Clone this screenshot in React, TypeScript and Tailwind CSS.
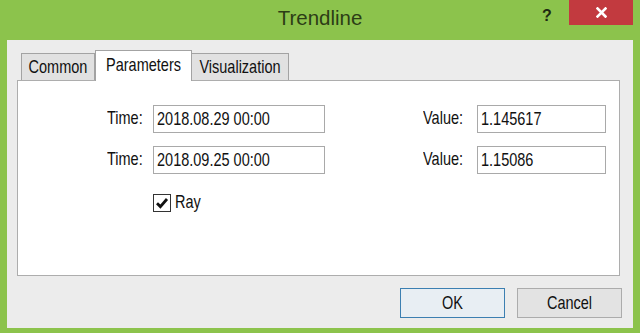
import React from "react";

const T = ({ children, className = "" }: { children: React.ReactNode; className?: string }) => (
  <span className={"inline-block scale-y-[1.28] origin-center leading-none " + className}>{children}</span>
);

function Field({ label, value, labelW, inputW }: { label: string; value: string; labelW: string; inputW: string }) {
  return (
    <div className="flex items-center">
      <div className={labelW + " text-[14.5px] text-[#111]"}>
        <T>{label}</T>
      </div>
      <div className={inputW + " h-[28px] border border-[#a9a9a9] bg-white flex items-center pl-[3px] text-[14.5px] text-[#111]"}>
        <T>{value}</T>
      </div>
    </div>
  );
}

export default function App() {
  return (
    <div
      className="w-[640px] h-[333px] bg-[#8cc34c] flex flex-col overflow-hidden"
      style={{ fontFamily: '"Liberation Sans", Arial, sans-serif' }}
    >
      {/* Title bar */}
      <div className="relative h-[40px] flex items-center justify-center shrink-0">
        <span className="text-[20.5px] text-[#2c3d16] leading-none pb-[4px]">Trendline</span>
        <span className="absolute left-[542px] top-[4px] text-[16px] font-bold text-[#1e2a12]">?</span>
        <div className="absolute left-[569px] top-0 w-[64px] h-[25px] bg-[#c23a3f] flex items-center justify-center">
          <svg width="11" height="11" viewBox="0 0 11 11">
            <path d="M1.5 1.5 L9.5 9.5 M9.5 1.5 L1.5 9.5" stroke="white" strokeWidth="2.6" strokeLinecap="square" />
          </svg>
        </div>
      </div>

      {/* Client area */}
      <div className="mx-[7px] h-[288px] bg-[#ececec] flex flex-col pl-[10px] pt-[10px]">
        {/* Tabs */}
        <div className="flex items-end h-[30px] pl-[4px] shrink-0">
          <div className="w-[74px] h-[27px] bg-[#e1e1e1] border border-[#a3a3a3] border-b-0 flex items-center justify-center text-[14.5px] text-[#111]">
            <T>Common</T>
          </div>
          <div className="w-[97px] h-[31px] -mb-px relative z-10 bg-white border border-[#a3a3a3] border-b-0 flex items-start pt-[7px] justify-center text-[14.5px] text-[#111]">
            <T>Parameters</T>
          </div>
          <div className="w-[97px] h-[27px] bg-[#e1e1e1] border border-[#a3a3a3] border-b-0 border-l-0 flex items-center justify-center text-[14.5px] text-[#111]">
            <T>Visualization</T>
          </div>
        </div>

        {/* Panel */}
        <div className="w-[603px] h-[196px] bg-white border border-[#adadad] shrink-0 flex flex-col pt-[24px] pl-[89px] pr-[13px]">
          <div className="flex items-center justify-between">
            <Field label="Time:" value="2018.08.29 00:00" labelW="w-[46px]" inputW="w-[172px]" />
            <Field label="Value:" value="1.145617" labelW="w-[54px]" inputW="w-[129px]" />
          </div>
          <div className="flex items-center justify-between mt-[13px]">
            <Field label="Time:" value="2018.09.25 00:00" labelW="w-[46px]" inputW="w-[172px]" />
            <Field label="Value:" value="1.15086" labelW="w-[54px]" inputW="w-[129px]" />
          </div>
          <div className="flex items-center mt-[18px] ml-[46px]">
            <div className="w-[18px] h-[18px] border border-[#333] bg-white flex items-center justify-center">
              <svg width="14" height="14" viewBox="0 0 14 14">
                <path d="M2 7.2 L5.4 10.6 L12 3" fill="none" stroke="#111" strokeWidth="2.8" strokeLinejoin="miter" />
              </svg>
            </div>
            <div className="ml-[4px] text-[14.5px] text-[#111]">
              <T>Ray</T>
            </div>
          </div>
        </div>

        {/* Buttons */}
        <div className="flex justify-end gap-[12px] pr-[11px] mt-[12px]">
          <div className="w-[105px] h-[30px] border border-[#3c7fb1] bg-[#e8eef3] flex items-center justify-center text-[14.5px] text-[#111]">
            <T>OK</T>
          </div>
          <div className="w-[105px] h-[30px] border border-[#acacac] bg-[#e3e3e3] flex items-center justify-center text-[14.5px] text-[#111]">
            <T>Cancel</T>
          </div>
        </div>
      </div>
    </div>
  );
}
